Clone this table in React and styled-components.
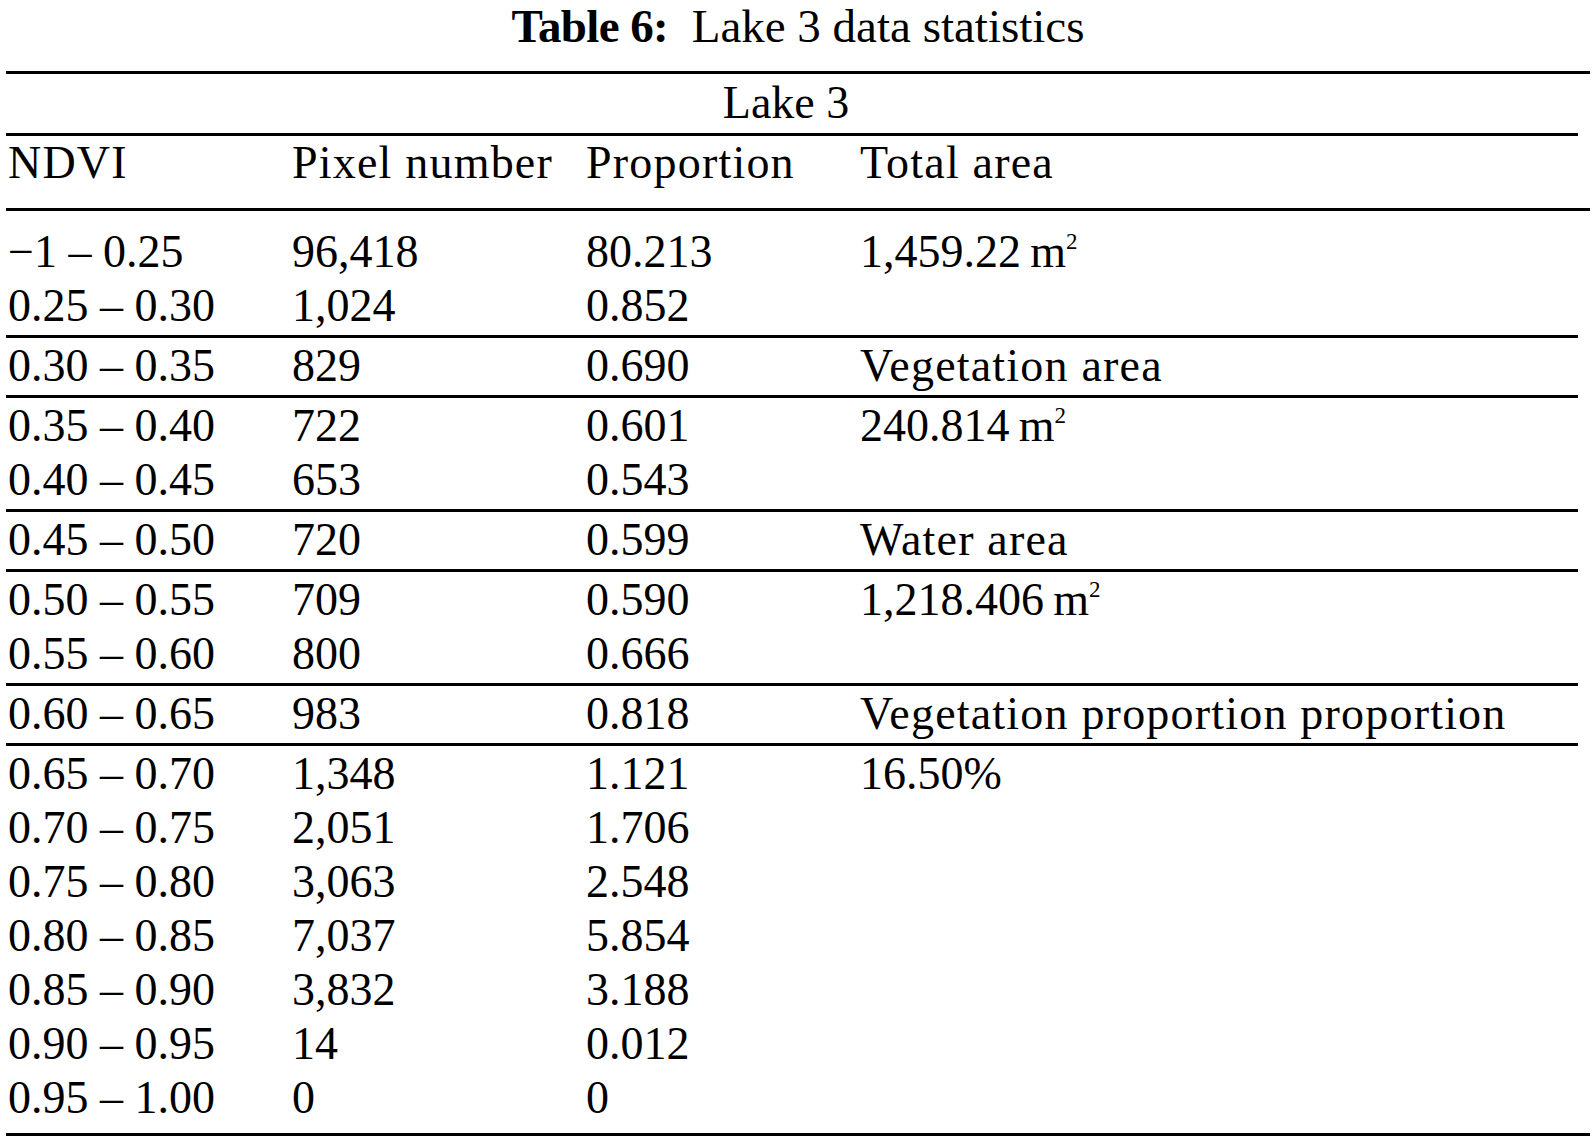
import React from 'react';
import styled, { createGlobalStyle } from 'styled-components';

const Global = createGlobalStyle`
  html, body { margin: 0; padding: 0; background: #fff; }
  body { font-family: "Liberation Serif", "Times New Roman", serif; color: #000; }
`;

const Page = styled.div`
  width: 1596px;
  height: 1142px;
  overflow: hidden;
  background: #fff;
  padding: 0 6px;
  box-sizing: border-box;
`;

const Caption = styled.div`
  font-size: 47px;
  line-height: 52px;
  text-align: center;
  white-space: pre;
  margin: 0 -6px 19px;
`;

const Bold = styled.span`
  font-weight: 700;
  letter-spacing: -0.6px;
`;

const Table = styled.div`
  border-top: 3px solid #000;
  border-bottom: 3px solid #000;
  font-size: 46px;
  line-height: 54px;
`;

const SpanHead = styled.div`
  margin-right: 12px;
  padding: 2px 12px 3px 0;
  border-bottom: 3px solid #000;
  text-align: center;
`;

const HeadRow = styled.div`
  display: grid;
  grid-template-columns: 284px 294px 274px 1fr;
  padding-bottom: 18px;
  border-bottom: 3px solid #000;
`;

const Group = styled.div`
  margin-right: 12px;
  padding: ${p => (p.$first ? '14px 0 2px' : p.$last ? '1px 0 8px' : '1px 0 2px')};
  border-top: ${p => (p.$first ? 'none' : '3px solid #000')};
`;

const Row = styled.div`
  display: grid;
  grid-template-columns: 284px 294px 274px 1fr;
`;

const Cell = styled.div`
  padding-left: 2px;
  white-space: nowrap;
  letter-spacing: ${p => (p.$word ? '1.2px' : '0')};
`;

const Sup = styled.sup`
  font-size: 0.5em;
  line-height: 0;
  vertical-align: 0.8em;
`;

const Unit = ({ v }) => (
  <>
    {v}
    {'\u2009'}m<Sup>2</Sup>
  </>
);

const groups = [
  { note: <Unit v="1,459.22" />, rows: [['\u22121 \u2013 0.25', '96,418', '80.213'], ['0.25 \u2013 0.30', '1,024', '0.852']] },
  { note: 'Vegetation area', word: true, rows: [['0.30 \u2013 0.35', '829', '0.690']] },
  { note: <Unit v="240.814" />, rows: [['0.35 \u2013 0.40', '722', '0.601'], ['0.40 \u2013 0.45', '653', '0.543']] },
  { note: 'Water area', word: true, rows: [['0.45 \u2013 0.50', '720', '0.599']] },
  { note: <Unit v="1,218.406" />, rows: [['0.50 \u2013 0.55', '709', '0.590'], ['0.55 \u2013 0.60', '800', '0.666']] },
  { note: 'Vegetation proportion proportion', word: true, rows: [['0.60 \u2013 0.65', '983', '0.818']] },
  {
    note: '16.50%',
    rows: [
      ['0.65 \u2013 0.70', '1,348', '1.121'],
      ['0.70 \u2013 0.75', '2,051', '1.706'],
      ['0.75 \u2013 0.80', '3,063', '2.548'],
      ['0.80 \u2013 0.85', '7,037', '5.854'],
      ['0.85 \u2013 0.90', '3,832', '3.188'],
      ['0.90 \u2013 0.95', '14', '0.012'],
      ['0.95 \u2013 1.00', '0', '0'],
    ],
  },
];

export default function App() {
  return (
    <Page>
      <Global />
      <Caption>
        <Bold>Table 6:</Bold>{'  '}Lake 3 data statistics
      </Caption>
      <Table>
        <SpanHead>Lake 3</SpanHead>
        <HeadRow>
          <Cell $word>NDVI</Cell>
          <Cell $word>Pixel number</Cell>
          <Cell $word>Proportion</Cell>
          <Cell $word>Total area</Cell>
        </HeadRow>
        {groups.map((g, gi) => (
          <Group key={gi} $first={gi === 0} $last={gi === groups.length - 1}>
            {g.rows.map((r, ri) => (
              <Row key={ri}>
                <Cell>{r[0]}</Cell>
                <Cell>{r[1]}</Cell>
                <Cell>{r[2]}</Cell>
                <Cell $word={g.word}>{ri === 0 ? g.note : null}</Cell>
              </Row>
            ))}
          </Group>
        ))}
      </Table>
    </Page>
  );
}
